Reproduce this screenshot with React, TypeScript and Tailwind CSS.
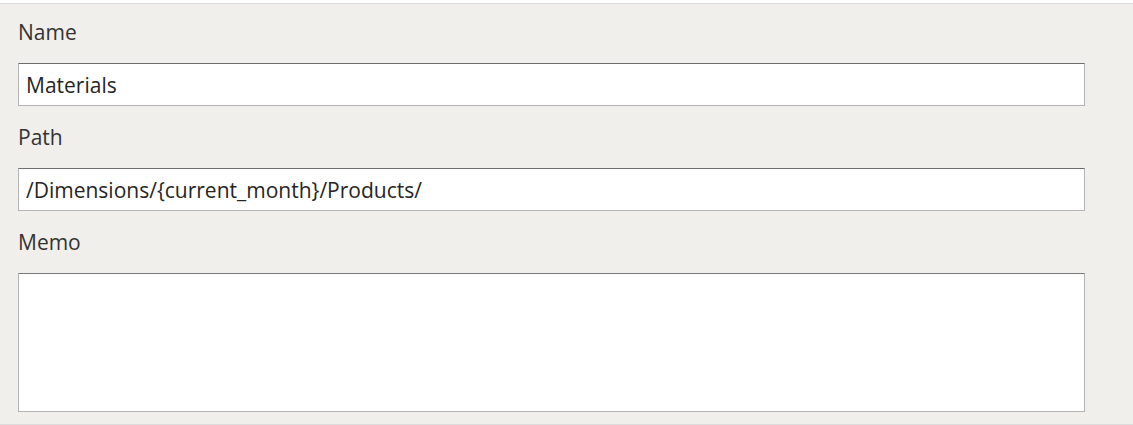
import React from "react";

const font = { fontFamily: '"Open Sans", "Noto Sans", sans-serif' };

function Field({ label, value, first, multiline }: { label: string; value?: string; first?: boolean; multiline?: boolean }) {
  return (
    <div className={first ? "" : "mt-[17px]"}>
      <div className="h-[28px] leading-[28px] text-[21px] text-[#333333] mb-[17px]">{label}</div>
      {multiline ? (
        <textarea
          readOnly
          className="block w-[1067px] h-[139px] bg-white border border-[#b4b4b4] border-t-[#7a7a7a] outline-none resize-none px-[7px] text-[21px] text-[#252525]"
          style={font}
          value={value ?? ""}
        />
      ) : (
        <input
          readOnly
          className="block w-[1067px] h-[43px] bg-white border border-[#b4b4b4] border-t-[#6e6e6e] outline-none px-[7px] text-[21px] text-[#252525]"
          style={font}
          value={value ?? ""}
        />
      )}
    </div>
  );
}

export default function App() {
  return (
    <div className="w-[1133px] h-[425px] bg-white pt-[3px]" style={font}>
      <div className="h-[422px] bg-[#f0efeb] border-t border-b border-[#dcdcdc] pt-[14px] pl-[18px] pr-[48px]">
        <Field label="Name" value="Materials" first />
        <Field label="Path" value="/Dimensions/{current_month}/Products/" />
        <Field label="Memo" multiline />
      </div>
    </div>
  );
}
